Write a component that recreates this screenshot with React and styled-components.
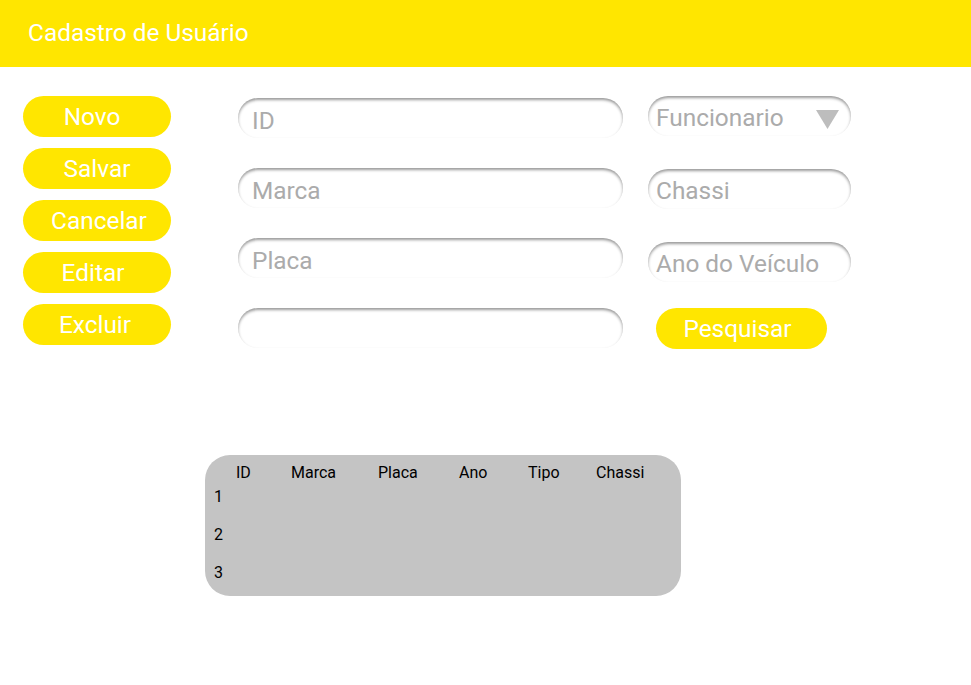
import React from "react";
import styled, { createGlobalStyle } from "styled-components";

const GlobalStyle = createGlobalStyle`
  body {
    margin: 0;
    background: #ffffff;
    font-family: Roboto, "Noto Sans", "Liberation Sans", sans-serif;
  }
`;

const Header = styled.header`
  height: 67px;
  background: #ffe600;
  display: flex;
  align-items: center;
  padding-left: 28px;
  box-sizing: border-box;
`;

const Title = styled.h1`
  margin: 0;
  font-size: 24.4px;
  font-weight: 400;
  color: #ffffff;
  padding-bottom: 3px;
`;

const Main = styled.div`
  display: flex;
  align-items: flex-start;
`;

const Sidebar = styled.div`
  display: flex;
  flex-direction: column;
  gap: 11px;
  margin: 29px 0 0 23px;
`;

const YellowButton = styled.button`
  width: ${(p) => p.$width || 148}px;
  height: 41px;
  border: none;
  border-radius: 21px;
  background: #ffe600;
  color: #ffffff;
  font-family: inherit;
  font-size: 24.4px;
  line-height: 41px;
  padding: 0;
  text-indent: ${(p) => (p.$shift || 0) * 2}px;
  text-align: center;
  cursor: pointer;
`;

const Column = styled.div`
  display: flex;
  flex-direction: column;
  gap: ${(p) => p.$gap}px;
  margin: ${(p) => p.$top}px 0 0 ${(p) => p.$left}px;
`;

const Field = styled.div`
  width: ${(p) => p.$width}px;
  height: 40px;
  box-sizing: border-box;
  padding: ${(p) => p.$pt}px 12px 0 ${(p) => p.$pl}px;
  border-radius: 20px;
  box-shadow: inset 0 2px 3px rgba(0, 0, 0, 0.4);
  font-size: 24.4px;
  line-height: 40px;
  color: #ababab;
  display: flex;
  justify-content: space-between;
  align-items: flex-start;
`;

const Caret = styled.svg`
  margin-top: 12px;
  flex: none;
`;

const SearchButton = styled(YellowButton)`
  margin: -7px 0 0 8px;
`;

const Table = styled.div`
  width: 476px;
  height: 141px;
  margin: 106px 0 0 205px;
  background: #c4c4c4;
  border-radius: 25px;
  box-sizing: border-box;
  padding: 8px 0 0 9px;
  font-size: 16px;
  line-height: 20px;
  color: #000000;
`;

const HeadRow = styled.div`
  display: grid;
  grid-template-columns: 55px 87px 81px 69px 68px auto;
  padding-left: 22px;
`;

const Rows = styled.div`
  display: flex;
  flex-direction: column;
  gap: 18px;
  margin-top: 4px;
`;

const leftFields = ["ID", "Marca", "Placa", ""];
const columns = ["ID", "Marca", "Placa", "Ano", "Tipo", "Chassi"];

export default function App() {
  return (
    <>
      <GlobalStyle />
      <Header>
        <Title>Cadastro de Usuário</Title>
      </Header>
      <Main>
        <Sidebar>
          <YellowButton $shift={-5}>Novo</YellowButton>
          <YellowButton $shift={0}>Salvar</YellowButton>
          <YellowButton $shift={2}>Cancelar</YellowButton>
          <YellowButton $shift={-4}>Editar</YellowButton>
          <YellowButton $shift={-2}>Excluir</YellowButton>
        </Sidebar>
        <Column $gap={30} $top={31} $left={67}>
          {leftFields.map((f, i) => (
            <Field key={i} $width={385} $pl={14} $pt={3}>
              {f}
            </Field>
          ))}
        </Column>
        <Column $gap={33} $top={29} $left={25}>
          <Field $width={203} $pl={8} $pt={2}>
            <span>Funcionario</span>
            <Caret width="23" height="19" viewBox="0 0 23 19">
              <polygon points="0,0 23,0 11.5,19" fill="#bdbdbd" />
            </Caret>
          </Field>
          <Field $width={203} $pl={8} $pt={2}>
            Chassi
          </Field>
          <Field $width={203} $pl={8} $pt={2}>
            Ano do Veículo
          </Field>
          <SearchButton $width={171} $shift={-4}>
            Pesquisar
          </SearchButton>
        </Column>
      </Main>
      <Table>
        <HeadRow>
          {columns.map((c) => (
            <span key={c}>{c}</span>
          ))}
        </HeadRow>
        <Rows>
          <span>1</span>
          <span>2</span>
          <span>3</span>
        </Rows>
      </Table>
    </>
  );
}
